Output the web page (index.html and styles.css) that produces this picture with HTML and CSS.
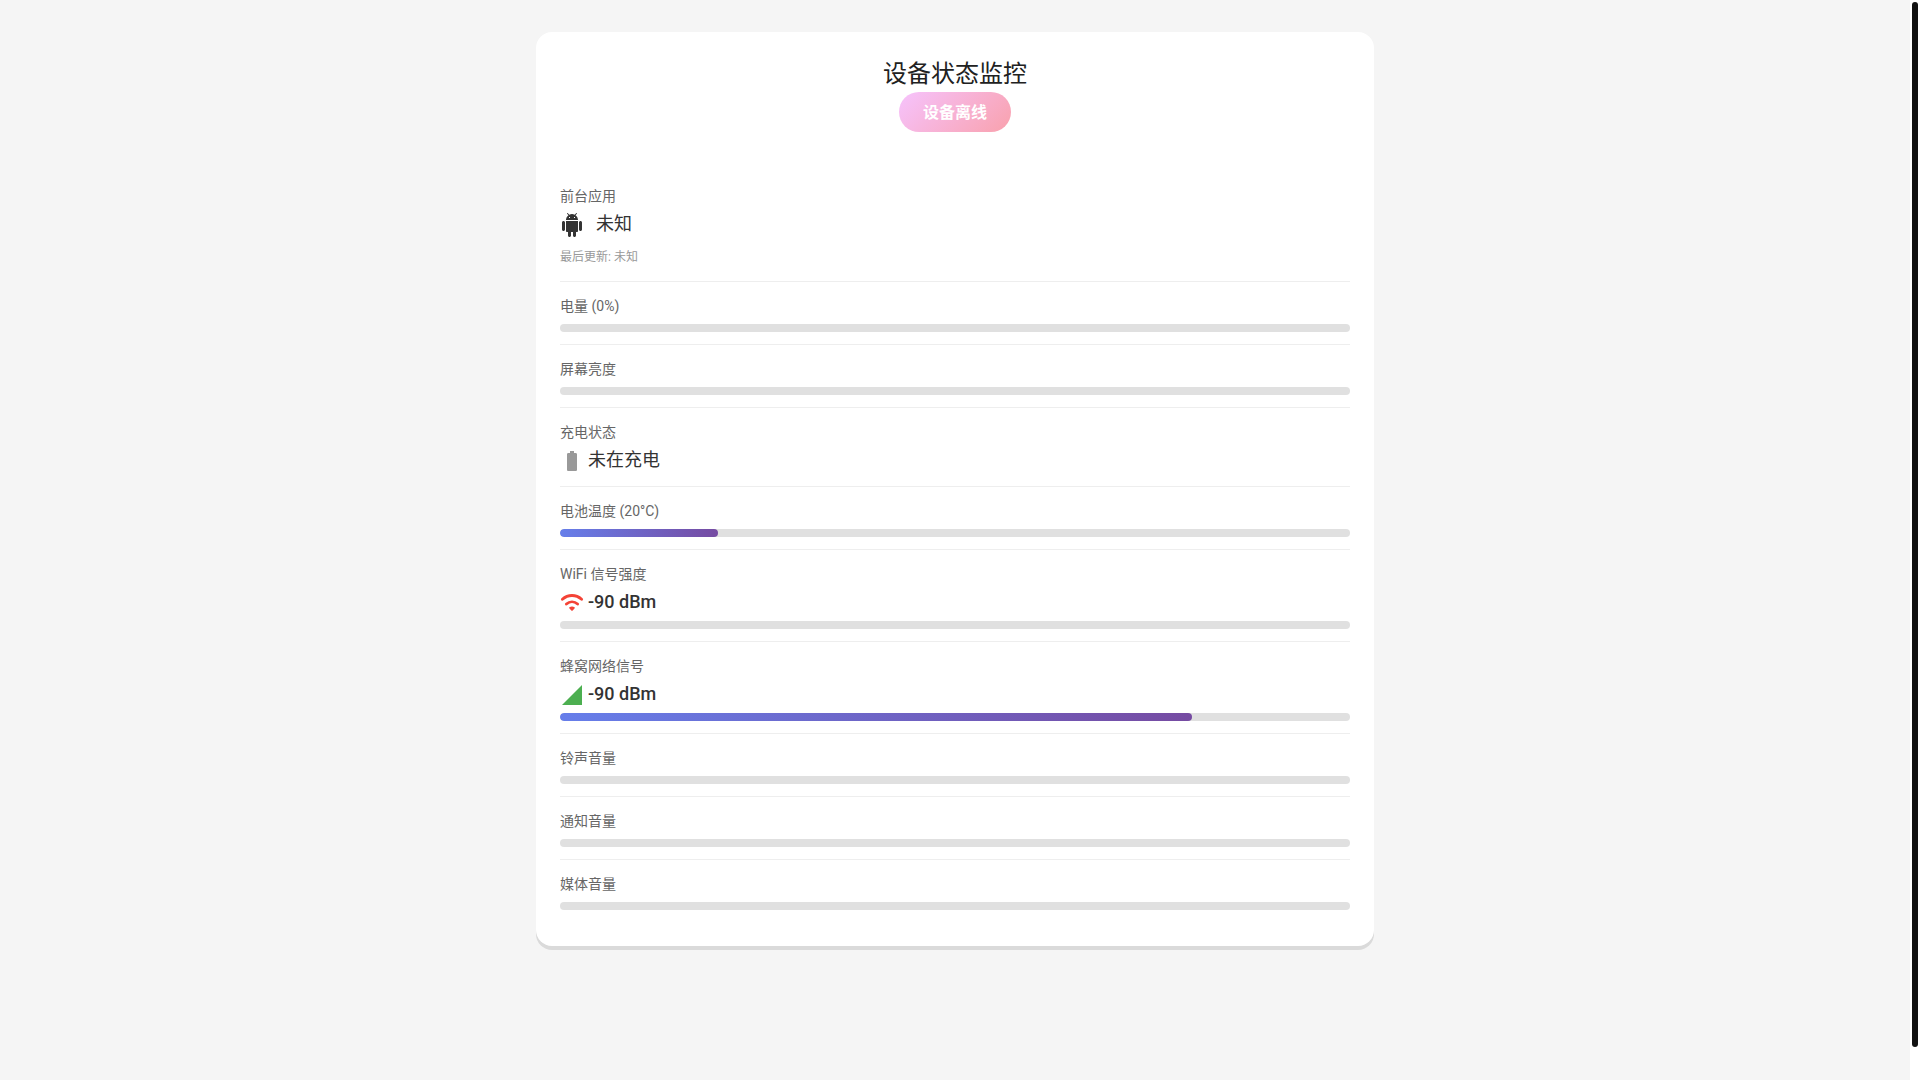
FILE: index.html
```html
<!DOCTYPE html>
<html lang="zh-CN">
<head>
<meta charset="utf-8">
<meta name="viewport" content="width=device-width, initial-scale=1">
<title>设备状态监控</title>
<link rel="stylesheet" href="styles.css">
</head>
<body>
<main class="page">
  <section class="card">
    <header class="header">
      <h1 class="title">设备状态监控</h1>
      <button class="status" type="button">设备离线</button>
    </header>
    <div class="item">
      <div class="label">前台应用</div>
      <div class="value value-app">
        <svg class="icon" viewBox="0 0 24 24" aria-hidden="true"><path fill="#333" d="M6 18c0 .55.45 1 1 1h1v3.5c0 .83.67 1.5 1.5 1.5s1.5-.67 1.5-1.5V19h2v3.5c0 .83.67 1.5 1.5 1.5s1.5-.67 1.5-1.5V19h1c.55 0 1-.45 1-1V8H6v10zM3.500 8C2.670 8 2 8.670 2 9.500v7c0 .83.67 1.500 1.500 1.500S5 17.330 5 16.500v-7C5 8.670 4.330 8 3.500 8zm17 0c-.83 0-1.500.67-1.500 1.500v7c0 .83.67 1.500 1.500 1.500s1.500-.67 1.500-1.500v-7c0-.83-.67-1.500-1.500-1.500zm-4.970-5.840l1.300-1.300c.2-.2.2-.51 0-.71-.2-.2-.51-.2-.71 0l-1.480 1.480C13.850 1.230 12.950 1 12 1c-.96 0-1.860.23-2.660.63L7.850.15c-.2-.2-.51-.2-.71 0-.2.2-.2.51 0 .71l1.310 1.310C6.970 3.260 6 5.010 6 7h12c0-1.990-.97-3.750-2.470-4.840zM10 5H9V4h1v1zm5 0h-1V4h1v1z"/></svg>
        <span class="reading">未知</span>
      </div>
      <div class="updated">最后更新: 未知</div>
    </div>
    <div class="item">
      <label class="label" for="battery">电量 (0%)</label>
      <progress class="bar" id="battery" max="100" value="0"></progress>
    </div>
    <div class="item">
      <label class="label" for="brightness">屏幕亮度</label>
      <progress class="bar" id="brightness" max="100" value="0"></progress>
    </div>
    <div class="item">
      <div class="label">充电状态</div>
      <div class="value">
        <svg class="icon" viewBox="0 0 24 24" aria-hidden="true"><path fill="#999" d="M15.670 4H14V2h-4v2H8.330C7.600 4 7 4.600 7 5.330v15.330C7 21.400 7.600 22 8.330 22h7.330c.74 0 1.340-.6 1.340-1.330V5.330C17 4.600 16.400 4 15.670 4z"/></svg>
        <span class="reading">未在充电</span>
      </div>
    </div>
    <div class="item">
      <label class="label" for="temperature">电池温度 (20°C)</label>
      <progress class="bar" id="temperature" max="100" value="20"></progress>
    </div>
    <div class="item">
      <label class="label" for="wifi">WiFi 信号强度</label>
      <div class="value">
        <svg class="icon" viewBox="0 0 24 24" aria-hidden="true"><g fill="none" stroke="#f44336" stroke-width="2.900" stroke-linecap="round"><path d="M2.400 8.300C8 3.200 16 3.200 21.600 8.300"/><path d="M6.400 13c3.300-2.900 7.900-2.900 11.200 0"/></g><path fill="#f44336" d="M9.400 16.300c1.500-1.200 3.700-1.200 5.200 0 .3.300.3.600.1.900l-2 2.200c-.4.500-1 .5-1.400 0l-2-2.200c-.2-.3-.2-.6.100-.9z"/></svg>
        <span class="reading reading-number">-90 dBm</span>
      </div>
      <progress class="bar" id="wifi" max="100" value="0"></progress>
    </div>
    <div class="item">
      <label class="label" for="cellular">蜂窝网络信号</label>
      <div class="value">
        <svg class="icon" viewBox="0 0 24 24" aria-hidden="true"><path fill="#4caf50" d="M2 22h20V2z"/></svg>
        <span class="reading reading-number">-90 dBm</span>
      </div>
      <progress class="bar" id="cellular" max="100" value="80"></progress>
    </div>
    <div class="item">
      <label class="label" for="ring">铃声音量</label>
      <progress class="bar" id="ring" max="100" value="0"></progress>
    </div>
    <div class="item">
      <label class="label" for="notice">通知音量</label>
      <progress class="bar" id="notice" max="100" value="0"></progress>
    </div>
    <div class="item">
      <label class="label" for="media">媒体音量</label>
      <progress class="bar" id="media" max="100" value="0"></progress>
    </div>
  </section>
</main>
<div class="scroll-track" aria-hidden="true"><div class="scroll-thumb"></div></div>
</body>
</html>
```
FILE: styles.css
```css
* {
  box-sizing: border-box;
}

body {
  display: flex;
  min-height: 100vh;
  margin: 0;
  background: #f5f5f5;
  color: #333;
  font-family: Roboto, "Noto Sans CJK SC", sans-serif;
}

.page {
  flex: 1;
  padding: 32px 16px;
}

.card {
  max-width: 838px;
  margin: 0 auto;
  padding: 24px;
  border-radius: 16px;
  background: #fff;
  box-shadow: 0 4px 0 #dadada;
}

.header {
  display: flex;
  flex-direction: column;
  align-items: center;
  padding-bottom: 40px;
}

.title {
  margin: 0;
  color: #212121;
  font-size: 24px;
  font-weight: 400;
  line-height: 36px;
}

.status {
  height: 40px;
  padding: 0 24px 3px;
  border: 0;
  border-radius: 20px;
  background: linear-gradient(135deg, #f6c3fd, #f9a1ad);
  color: #fff;
  font: inherit;
  font-size: 16px;
  font-weight: 700;
}

.item {
  display: flex;
  flex-direction: column;
  padding: 12px 0;
  border-bottom: 1px solid #eee;
}

.item:last-child {
  border-bottom: 0;
}

.label {
  color: #666;
  font-size: 14px;
  line-height: 25px;
}

.value {
  display: flex;
  gap: 4px;
  min-height: 25px;
  margin-top: 4px;
}

.value-app {
  gap: 12px;
}

.icon {
  width: 24px;
  height: 24px;
}

.reading {
  font-size: 18px;
  line-height: 22px;
}

.reading-number {
  font-weight: 500;
}

.updated {
  margin-top: 8px;
  color: #999;
  font-size: 12px;
  line-height: 23px;
}

.bar {
  appearance: none;
  display: block;
  width: 100%;
  height: 8px;
  margin-top: 5px;
  overflow: hidden;
  border: 0;
  border-radius: 4px;
  background: #e0e0e0;
}

.bar::-webkit-progress-bar {
  background: #e0e0e0;
}

.bar::-webkit-progress-value {
  border-radius: 4px;
  background: linear-gradient(90deg, #667eea, #764ba2);
}

.scroll-track {
  width: 10px;
  padding: 2px 2px 33px;
  background: #fff;
}

.scroll-thumb {
  height: 100%;
  border-radius: 3px;
  background: #111;
}
```
